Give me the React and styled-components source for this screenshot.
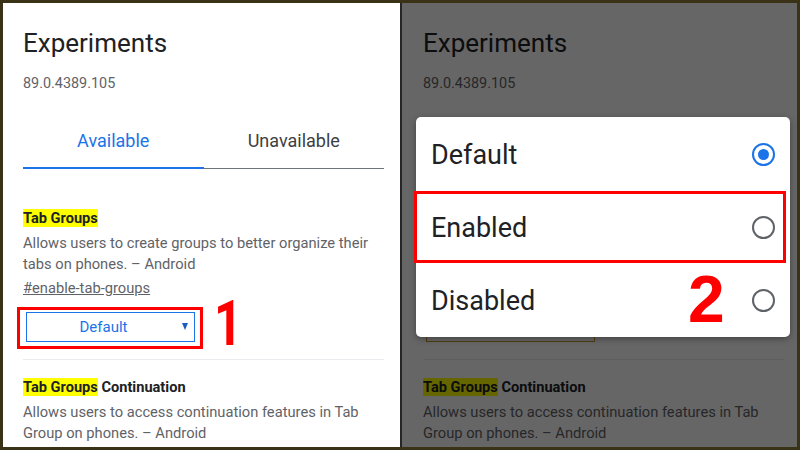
import React from 'react';
import styled, { createGlobalStyle } from 'styled-components';

const GlobalStyle = createGlobalStyle`
  html, body {
    margin: 0;
    padding: 0;
    background: #3a3216;
  }
  *, *:before, *:after {
    box-sizing: border-box;
  }
`;

const Frame = styled.main`
  display: flex;
  gap: 2px;
  width: 800px;
  height: 450px;
  border: 3px solid #3a3216;
  background: #262626;
  overflow: hidden;
  font-family: Roboto, 'Noto Sans', sans-serif;
`;

const Panel = styled.section`
  position: relative;
  flex: 0 0 ${({ $width }) => $width}px;
  height: 100%;
  background: #fff;
  padding: 25px 0 0 ${({ $inset }) => $inset}px;
  overflow: hidden;
`;

const Content = styled.div`
  width: 361px;
`;

const Title = styled.h1`
  margin: 0;
  font-size: 26px;
  line-height: 30px;
  font-weight: 400;
  color: #202124;
`;

const Version = styled.div`
  margin-top: 16px;
  font-size: 14.4px;
  line-height: 20px;
  color: #5f6368;
`;

const Tabs = styled.nav`
  display: flex;
  align-items: flex-start;
  margin-top: 20px;
`;

const Tab = styled.div`
  flex: 1;
  text-align: center;
  font-size: 18px;
  line-height: 20px;
  padding-top: 17px;
  padding-bottom: ${({ $active }) => ($active ? 16 : 17)}px;
  color: ${({ $active }) => ($active ? '#1a73e8' : '#3c4043')};
  border-bottom: ${({ $active }) => ($active ? '2px solid #1a73e8' : '1px solid #70757a')};
`;

const Flag = styled.article`
  padding-top: ${({ $first }) => ($first ? 39 : 17)}px;
`;

const FlagTitle = styled.h2`
  margin: 0;
  font-size: 14.6px;
  line-height: 20px;
  font-weight: 700;
  color: #202124;
`;

const Mark = styled.mark`
  background: #ffff00;
  color: inherit;
`;

const FlagDesc = styled.p`
  margin: 5px 0 0;
  font-size: 14.7px;
  line-height: 21px;
  color: #5f6368;
  white-space: nowrap;
`;

const FlagLink = styled.a`
  display: block;
  margin-top: 3px;
  font-size: 14.7px;
  line-height: 20px;
  color: #5f6368;
  text-decoration: underline;
`;

const SelectRow = styled.div`
  display: flex;
  align-items: flex-start;
  height: 30px;
  margin-top: 14px;
  padding-left: 3px;
`;

const Select = styled.div`
  position: relative;
  display: flex;
  align-items: center;
  justify-content: center;
  width: 169px;
  height: 30px;
  padding-right: 14px;
  border: 1px solid ${({ $border }) => $border};
  color: #1a73e8;
  font-size: 15px;
`;

const Caret = styled.span`
  position: absolute;
  right: 6px;
  top: 10px;
  width: 0;
  height: 0;
  border-left: 3.5px solid transparent;
  border-right: 3.5px solid transparent;
  border-top: 7px solid #1a5cc4;
`;

const RedBox = styled.span`
  position: absolute;
  top: ${({ $t }) => $t}px;
  bottom: ${({ $b }) => $b}px;
  left: ${({ $l }) => $l}px;
  right: ${({ $r }) => $r}px;
  border: 3px solid #ff0000;
  pointer-events: none;
`;

const StepNumber = styled.span`
  display: inline-block;
  font-family: Roboto, 'Liberation Sans', sans-serif;
  font-weight: 700;
  font-size: 63px;
  line-height: 30px;
  color: #ff0000;
  margin: -3px 0 0 19px;
  transform: scaleX(0.78);
  transform-origin: left center;
`;

const Divider = styled.hr`
  margin: 17px 0 0;
  border: 0;
  height: 1px;
  background: #e8eaed;
`;

const Scrim = styled.div`
  position: absolute;
  inset: 0;
  background: rgba(0, 0, 0, 0.6);
`;

const Dialog = styled.div`
  position: absolute;
  left: 14px;
  top: 114px;
  width: 374px;
  height: 220px;
  padding-top: 1px;
  background: #fff;
  border-radius: 5px;
  box-shadow: 0 2px 6px rgba(0, 0, 0, 0.35);
`;

const Option = styled.div`
  position: relative;
  display: flex;
  align-items: center;
  justify-content: space-between;
  height: 73px;
  padding: 0 15px;
  font-size: 27px;
  color: #202124;
`;

const Radio = styled.span`
  display: flex;
  align-items: center;
  justify-content: center;
  width: 23px;
  height: 23px;
  border-radius: 50%;
  border: 2px solid ${({ $checked }) => ($checked ? '#1a73e8' : '#5f6368')};
  &::after {
    content: '';
    display: ${({ $checked }) => ($checked ? 'block' : 'none')};
    width: 11px;
    height: 11px;
    border-radius: 50%;
    background: #1a73e8;
  }
`;

const FloatingNumber = styled.span`
  position: absolute;
  left: 272px;
  top: 2px;
  font-family: 'Liberation Sans', Arial, sans-serif;
  font-weight: 700;
  font-size: 66px;
  line-height: 66px;
  color: #ff0000;
`;

function FlagsPage({ annotated }) {
  return (
    <Content>
      <Title>Experiments</Title>
      <Version>89.0.4389.105</Version>
      <Tabs>
        <Tab $active>Available</Tab>
        <Tab>Unavailable</Tab>
      </Tabs>
      <Flag $first>
        <FlagTitle><Mark>Tab Groups</Mark></FlagTitle>
        <FlagDesc>
          Allows users to create groups to better organize their<br />
          tabs on phones. – Android
        </FlagDesc>
        <FlagLink>#enable-tab-groups</FlagLink>
        <SelectRow>
          <Select $border={annotated ? '#1a73e8' : '#c49a2c'}>
            Default
            <Caret />
            {annotated && <RedBox $t={-6} $b={-8} $l={-10} $r={-9} />}
          </Select>
          {annotated && <StepNumber>1</StepNumber>}
        </SelectRow>
        <Divider />
      </Flag>
      <Flag>
        <FlagTitle><Mark>Tab Groups</Mark> Continuation</FlagTitle>
        <FlagDesc>
          Allows users to access continuation features in Tab<br />
          Group on phones. – Android
        </FlagDesc>
      </Flag>
    </Content>
  );
}

const options = [
  { id: 'default', label: 'Default', checked: true },
  { id: 'enabled', label: 'Enabled', boxed: true },
  { id: 'disabled', label: 'Disabled', step: '2' },
];

export default function App() {
  return (
    <>
      <GlobalStyle />
      <Frame>
        <Panel $width={397} $inset={20}>
          <FlagsPage annotated />
        </Panel>
        <Panel $width={395} $inset={21}>
          <FlagsPage />
          <Scrim />
          <Dialog>
            {options.map((opt) => (
              <Option key={opt.id}>
                {opt.label}
                <Radio $checked={opt.checked} />
                {opt.boxed && <RedBox $t={0} $b={1} $l={-2} $r={4} />}
                {opt.step && <FloatingNumber>{opt.step}</FloatingNumber>}
              </Option>
            ))}
          </Dialog>
        </Panel>
      </Frame>
    </>
  );
}
